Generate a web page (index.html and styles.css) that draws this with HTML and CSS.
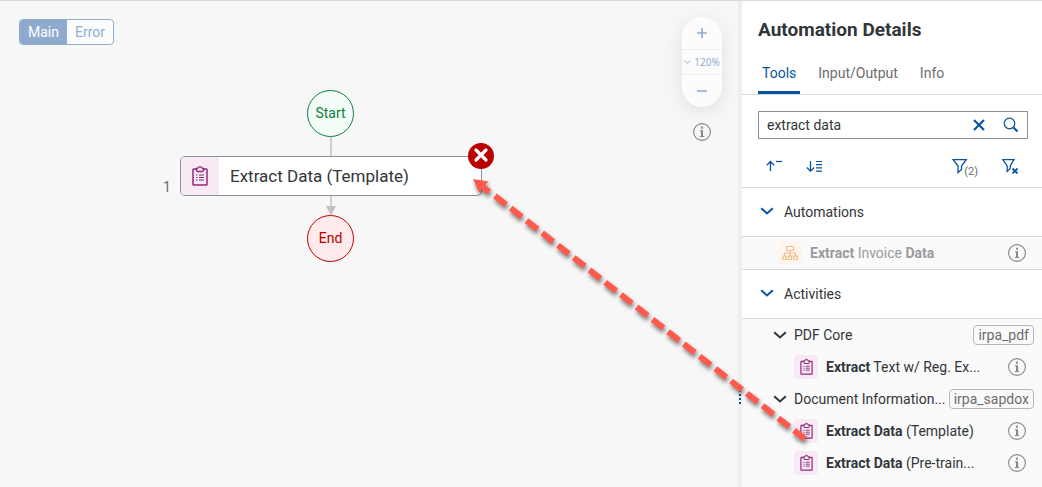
FILE: index.html
```html
<!DOCTYPE html>
<html lang="en">
<head>
<meta charset="utf-8">
<title>Automation Details</title>
<link rel="stylesheet" href="styles.css">
</head>
<body>
<svg class="sprite" aria-hidden="true">
  <symbol id="clipboard" viewBox="0 0 16 20">
    <path d="M4.5 3H1.8Q1 3 1 3.8V18.2Q1 19 1.8 19H14.2Q15 19 15 18.2V3.8Q15 3 14.2 3H11.5" fill="none" stroke="currentColor" stroke-width="1.5"/>
    <path d="M4.5 2.5H5.5Q6 .8 8 .8T10.500 2.500H11.500V4.500L10.500 5.500H5.500L4.500 4.500Z" fill="none" stroke="currentColor" stroke-width="1.300"/>
    <path d="M4 9h1.500M7 9h5M4 11.500h1.500M7 11.500h5M4 14h1.500M7 14h5" stroke="currentColor" stroke-width="1.200"/>
  </symbol>
  <symbol id="info" viewBox="0 0 18 18">
    <circle cx="9" cy="9" r="8.400" fill="none" stroke="currentColor" stroke-width="1.100"/>
    <path d="M8 3.800h2v2H8zM7 7.300h3V13h1.200v.9H6.800V13H8V8.200H7z" fill="currentColor"/>
  </symbol>
  <symbol id="chevron" viewBox="0 0 14 8">
    <path d="M1.200 1.200L7 6.500L12.800 1.200" fill="none" stroke="currentColor" stroke-width="2"/>
  </symbol>
</svg>

<div class="app">
  <main class="canvas">
    <div class="segmented">
      <button class="segment segment-on" type="button">Main</button>
      <button class="segment" type="button">Error</button>
    </div>

    <svg class="connector" viewBox="0 0 12 126" aria-hidden="true">
      <path d="M6 0V116" stroke="#cfcfcf" stroke-width="2"/>
      <path d="M1 115H11L6 125Z" fill="#c2c2c2"/>
    </svg>
    <div class="node node-start">Start</div>
    <div class="step-number">1</div>
    <div class="step">
      <span class="step-icon"><svg class="clip-large"><use href="#clipboard"/></svg></span>
      <span class="step-label">Extract Data (Template)</span>
      <button class="step-remove" type="button" aria-label="Remove step">
        <svg viewBox="0 0 26 26"><path d="M8 7L18 17M18 7L8 17" stroke="#fff" stroke-width="3.200" stroke-linecap="round"/></svg>
      </button>
    </div>
    <div class="node node-end">End</div>

    <div class="canvas-tools">
      <div class="zoom">
        <button class="zoom-button" type="button" aria-label="Zoom in"><svg viewBox="0 0 12 12"><path d="M1 6h10M6 1v10" stroke="currentColor" stroke-width="1.600"/></svg></button>
        <button class="zoom-level" type="button"><svg viewBox="0 0 14 8"><use href="#chevron"/></svg>120%</button>
        <button class="zoom-button" type="button" aria-label="Zoom out"><svg viewBox="0 0 12 12"><path d="M1 6h10" stroke="currentColor" stroke-width="1.600"/></svg></button>
      </div>
      <button class="info-button" type="button" aria-label="Help"><svg><use href="#info"/></svg></button>
    </div>
  </main>

  <div class="splitter"><span class="grip"></span></div>

  <aside class="panel">
    <h1 class="title">Automation Details</h1>
    <nav class="tabs">
      <a class="tab tab-on" href="#tools">Tools</a>
      <a class="tab" href="#io">Input/Output</a>
      <a class="tab" href="#about">Info</a>
    </nav>
    <div class="search">
      <input class="search-input" type="text" value="extract data" aria-label="Search tools">
      <button class="icon-button" type="button" aria-label="Clear"><svg class="icon-clear" viewBox="0 0 12 12"><path d="M1 1L11 11M11 1L1 11" stroke="currentColor" stroke-width="2.200"/></svg></button>
      <button class="icon-button" type="button" aria-label="Search"><svg class="icon-search" viewBox="0 0 16 16"><circle cx="6.500" cy="6.500" r="5.300" fill="none" stroke="currentColor" stroke-width="1.200"/><path d="M10.500 10.500L14.500 14.500" stroke="currentColor" stroke-width="2.200"/></svg></button>
    </div>
    <div class="toolbar">
      <button class="icon-button" type="button" aria-label="Collapse all"><svg class="icon-tool" viewBox="0 0 16 16"><path d="M4.500 13V4M.8 7.200L4.500 3.500L8.200 7.200" fill="none" stroke="currentColor" stroke-width="1.300"/><path d="M10 3.500h6" stroke="currentColor" stroke-width="1.300"/></svg></button>
      <button class="icon-button" type="button" aria-label="Expand all"><svg class="icon-tool" viewBox="0 0 16 16"><path d="M4.500 3V13M.8 9.500L4.500 13.200L8.200 9.500" fill="none" stroke="currentColor" stroke-width="1.300"/><path d="M10 3.500h6M10 6.700h6M10 9.900h6M10 13.100h6" stroke="currentColor" stroke-width="1.200"/></svg></button>
      <button class="icon-button filter" type="button" aria-label="Filters, 2 active"><svg class="icon-tool" viewBox="0 0 16 16"><path d="M1.200 1.700H14.200L9.500 8V11.500L6 14.500V8Z" fill="none" stroke="currentColor" stroke-width="1.300"/></svg><span class="filter-count">(2)</span></button>
      <button class="icon-button" type="button" aria-label="Clear filters"><svg class="icon-tool" viewBox="0 0 16 16"><path d="M.8 1.700H12L8.200 8V10.500L5.200 13.500V8Z" fill="none" stroke="currentColor" stroke-width="1.300"/><path d="M10.500 10.500L15.500 15.500M15.500 10.500L10.500 15.500" stroke="currentColor" stroke-width="1.800"/></svg></button>
    </div>

    <button class="section" type="button"><svg class="chevron"><use href="#chevron"/></svg>Automations</button>
    <div class="row row-disabled">
      <span class="tile tile-orange"><svg class="icon-flow" viewBox="0 0 16 16"><path d="M4.500 1.500h7v4h-7zM8 5.500v2.500M2.500 11V8h11v3M8 8v3M.8 11.200h3.400v3.300H.8zM6.300 11.200h3.400v3.300H6.300zM11.800 11.200h3.400v3.300h-3.400z" fill="none" stroke="currentColor" stroke-width="1.200"/></svg></span>
      <span class="row-label"><b>Extract</b> Invoice <b>Data</b></span>
      <button class="info-button" type="button" aria-label="Details"><svg><use href="#info"/></svg></button>
    </div>
    <button class="section" type="button"><svg class="chevron"><use href="#chevron"/></svg>Activities</button>

    <div class="tree">
      <button class="group" type="button"><svg class="chevron"><use href="#chevron"/></svg><span class="group-label">PDF Core</span><span class="tag">irpa_pdf</span></button>
      <div class="row">
        <span class="tile"><svg class="clip-small"><use href="#clipboard"/></svg></span>
        <span class="row-label"><b>Extract</b> Text w/ Reg. Ex...</span>
        <button class="info-button" type="button" aria-label="Details"><svg><use href="#info"/></svg></button>
      </div>
      <button class="group" type="button"><svg class="chevron"><use href="#chevron"/></svg><span class="group-label">Document Information...</span><span class="tag">irpa_sapdox</span></button>
      <div class="row">
        <span class="tile"><svg class="clip-small"><use href="#clipboard"/></svg></span>
        <span class="row-label"><b>Extract Data</b> (Template)</span>
        <button class="info-button" type="button" aria-label="Details"><svg><use href="#info"/></svg></button>
      </div>
      <div class="row">
        <span class="tile"><svg class="clip-small"><use href="#clipboard"/></svg></span>
        <span class="row-label"><b>Extract Data</b> (Pre-train...</span>
        <button class="info-button" type="button" aria-label="Details"><svg><use href="#info"/></svg></button>
      </div>
    </div>
  </aside>

  <svg class="drag-arrow" viewBox="0 0 350 280" aria-hidden="true">
    <path d="M335 269L20 22" fill="none" stroke="#ff5a4c" stroke-width="6" stroke-dasharray="14 6"/>
    <path d="M3 9L18.500 11.500L15 15L21 19.500L17 24.500L11.500 19.500L9 22.500Z" fill="#ff5a4c"/>
  </svg>
</div>
</body>
</html>
```
FILE: styles.css
```css
* { box-sizing: border-box; }

body {
  margin: 0;
  font-family: Roboto, "Liberation Sans", sans-serif;
  font-size: 14px;
  line-height: 20px;
  color: #32363a;
}

button, input { font: inherit; color: inherit; }

button {
  display: flex;
  align-items: center;
  margin: 0;
  padding: 0;
  border: 0;
  background: none;
}

svg { display: block; flex-shrink: 0; }
.sprite { position: absolute; width: 0; height: 0; }

.app {
  position: relative;
  display: flex;
  min-height: 100vh;
  border-top: 1px solid #d9d9d9;
}

.canvas {
  position: relative;
  flex: 1;
  display: flex;
  justify-content: space-between;
  align-items: flex-start;
  padding: 16px 16px 16px 19px;
  background: #f7f7f7;
}

.segmented {
  display: flex;
  margin-top: 2px;
  border: 1px solid #91aed2;
  border-radius: 4px;
  overflow: hidden;
  background: #fcfcfc;
}

.segment {
  height: 24px;
  padding: 0 8px;
  color: #8eadd3;
}

.segment-on { background: #8eabcf; color: #fff; }

.connector {
  position: absolute;
  left: 325px;
  top: 90px;
  width: 12px;
  height: 126px;
}

.node {
  position: absolute;
  left: 307px;
  display: flex;
  align-items: center;
  justify-content: center;
  width: 47px;
  height: 47px;
  padding-bottom: 2px;
  border: 1px solid;
  border-radius: 50%;
}

.node-start { top: 89px; color: #107e3e; background: #f1fdf6; }
.node-end { top: 214px; color: #bb0000; background: #ffebeb; }

.step-number { position: absolute; left: 163px; top: 176px; color: #6a6d70; }

.step {
  position: absolute;
  left: 180px;
  top: 155px;
  display: flex;
  align-items: center;
  width: 302px;
  height: 40px;
  border: 1px solid #89919a;
  border-radius: 5px;
  background: #fff;
}

.step-icon {
  display: flex;
  align-self: stretch;
  align-items: center;
  justify-content: center;
  width: 38px;
  border-radius: 4px 0 0 4px;
  background: #f8eaf5;
  color: #8f2a78;
}

.step-label { margin-left: 11px; font-size: 17px; }
.clip-large { width: 16px; height: 20px; }
.clip-small { width: 13px; height: 16px; }

.step-remove {
  position: absolute;
  right: -13px;
  top: -14px;
  width: 26px;
  height: 26px;
  border-radius: 50%;
  background: #bb0000;
}

.step-remove svg { width: 26px; height: 26px; }

.canvas-tools { display: flex; flex-direction: column; align-items: center; gap: 16px; }

.zoom {
  width: 40px;
  border-radius: 20px;
  background: #fcfcfc;
  box-shadow: 0 4px 18px rgba(80, 100, 95, 0.15);
  color: #8eadd3;
}

.zoom-button { justify-content: center; width: 100%; height: 32px; }
.zoom-button svg { width: 12px; height: 12px; }

.zoom-level {
  gap: 3px;
  justify-content: center;
  width: 100%;
  height: 26px;
  border: solid #eee;
  border-width: 1px 0;
  font-family: "Noto Sans", sans-serif;
  font-size: 10px;
}

.zoom-level svg { width: 7px; height: 4px; }

.info-button { color: #85888a; }
.info-button svg { width: 18px; height: 18px; }

.splitter {
  display: flex;
  flex-direction: column;
  align-items: center;
  width: 4px;
  background: #eeeff0;
}

.grip {
  width: 2px;
  height: 14px;
  margin-top: 389px;
  background: repeating-linear-gradient(#0854a0 0 2px, transparent 2px 4px);
}

.panel {
  display: flex;
  flex-direction: column;
  width: 300px;
  background: #fff;
}

.title {
  margin: 0;
  padding: 17px 16px 0;
  font-size: 19px;
  line-height: 24px;
}

.tabs {
  display: flex;
  gap: 14px;
  padding: 10px 16px 0;
  border-bottom: 1px solid #d9d9d9;
}

.tab {
  padding: 11px 4px 8px;
  border-bottom: 3px solid transparent;
  color: #6a6d70;
  text-decoration: none;
}

.tab-on { color: #0854a0; border-color: #0854a0; }

.search {
  display: flex;
  align-items: center;
  gap: 18px;
  margin: 16px 14px 0 16px;
  padding: 0 8px;
  height: 28px;
  border: 1px solid #89919a;
}

.search-input {
  flex: 1;
  min-width: 0;
  padding: 0;
  border: 0;
  outline: 0;
  background: none;
}

.icon-button { color: #0854a0; }
.icon-clear { width: 12px; height: 12px; }
.icon-search { width: 16px; height: 16px; }
.icon-tool { width: 16px; height: 16px; }

.toolbar {
  display: flex;
  align-items: center;
  gap: 24px;
  padding: 15px 24px 9px;
  height: 49px;
  border-bottom: 1px solid #d9d9d9;
}

.filter { margin-left: auto; }
.filter-count { padding-top: 12px; margin-left: -4px; font-size: 11px; line-height: 12px; color: #6a6d70; }

.section {
  gap: 10px;
  height: 49px;
  padding: 0 18px;
  border-bottom: 1px solid #d9d9d9;
}

.section .chevron { margin-bottom: 2px; color: #0854a0; }
.chevron { width: 14px; height: 8px; }

.row {
  display: flex;
  align-items: center;
  gap: 8px;
  height: 32px;
  padding: 0 16px 0 52px;
}

.row-label { flex: 1; white-space: nowrap; }

.row-disabled {
  height: 33px;
  padding-left: 36px;
  border-bottom: 1px solid #d9d9d9;
  background: #fafafa;
}

.row-disabled .row-label { color: #999b9d; }

.tile {
  display: flex;
  align-items: center;
  justify-content: center;
  width: 24px;
  height: 24px;
  border-radius: 4px;
  background: #f8eaf5;
  color: #8f2a78;
}

.tile-orange { background: #fdf5ee; color: #f0bd8c; }
.icon-flow { width: 16px; height: 16px; }

.tree { flex: 1; background: #fafafa; }

.group {
  gap: 7px;
  width: 100%;
  height: 32px;
  padding: 0 8px 0 31px;
  text-align: left;
}

.group-label { flex: 1; min-width: 0; white-space: nowrap; }

.tag {
  padding: 0 4px;
  border: 1px solid #b5b8bb;
  border-radius: 4px;
  line-height: 18px;
  color: #6a6d70;
}

.drag-arrow {
  position: absolute;
  right: 222px;
  top: 169px;
  width: 350px;
  height: 280px;
  pointer-events: none;
  filter: drop-shadow(1px 3px 2px rgba(0, 0, 0, 0.5));
}
```
